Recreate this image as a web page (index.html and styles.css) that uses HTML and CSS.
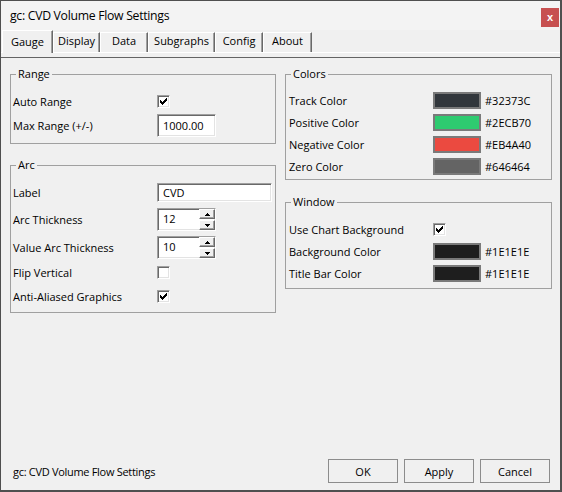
FILE: index.html
```html
<!DOCTYPE html>
<html>
<head>
<meta charset="utf-8">
<link rel="stylesheet" href="styles.css">
</head>
<body>
<div class="window">
  <div class="titlebar">
    <span class="title">gc: CVD Volume Flow Settings</span>
    <span class="close">x</span>
  </div>
  <div class="tabs">
    <div class="tab tab-gauge active">Gauge</div>
    <div class="tab tab-display">Display</div>
    <div class="tab tab-data">Data</div>
    <div class="tab tab-subgraphs">Subgraphs</div>
    <div class="tab tab-config">Config</div>
    <div class="tab tab-about">About</div>
  </div>
  <div class="tabline"></div>
  <div class="content">
    <div class="col col-left">
      <fieldset class="group group-range">
        <legend>Range</legend>
        <div class="row h24"><span>Auto Range</span><span class="check checked"><svg viewBox="0 0 13 13" width="13" height="13"><path transform="translate(3 3)" d="M0 2H1V3H2V4H3V3H4V2H5V1H6V0H7V3H6V4H5V5H4V6H3V7H2V6H1V5H0Z"/></svg></span></div>
        <div class="row h25"><span>Max Range (+/-)</span><span class="edit edit-short">1000.00</span></div>
      </fieldset>
      <fieldset class="group group-arc">
        <legend>Arc</legend>
        <div class="row h25"><span>Label</span><span class="edit edit-long">CVD</span></div>
        <div class="row h29"><span>Arc Thickness</span>
          <span class="spin"><span class="spin-val">12</span><span class="spin-btns"><span class="spin-btn"><svg viewBox="0 0 5 3" width="5" height="3"><path d="M2 0H3V1H4V2H5V3H0V2H1V1H2Z"/></svg></span><span class="spin-btn"><svg viewBox="0 0 5 3" width="5" height="3"><path d="M0 0H5V1H4V2H3V3H2V2H1V1H0Z"/></svg></span></span></span>
        </div>
        <div class="row h27"><span>Value Arc Thickness</span>
          <span class="spin"><span class="spin-val">10</span><span class="spin-btns"><span class="spin-btn"><svg viewBox="0 0 5 3" width="5" height="3"><path d="M2 0H3V1H4V2H5V3H0V2H1V1H2Z"/></svg></span><span class="spin-btn"><svg viewBox="0 0 5 3" width="5" height="3"><path d="M0 0H5V1H4V2H3V3H2V2H1V1H0Z"/></svg></span></span></span>
        </div>
        <div class="row h23"><span>Flip Vertical</span><span class="check"></span></div>
        <div class="row h25"><span>Anti-Aliased Graphics</span><span class="check checked"><svg viewBox="0 0 13 13" width="13" height="13"><path transform="translate(3 3)" d="M0 2H1V3H2V4H3V3H4V2H5V1H6V0H7V3H6V4H5V5H4V6H3V7H2V6H1V5H0Z"/></svg></span></div>
      </fieldset>
    </div>
    <div class="col col-right">
      <fieldset class="group group-colors">
        <legend>Colors</legend>
        <div class="row h22"><span>Track Color</span><span class="color"><span class="swatch sw-track"></span><span class="hex">#32373C</span></span></div>
        <div class="row h22"><span>Positive Color</span><span class="color"><span class="swatch sw-positive"></span><span class="hex">#2ECB70</span></span></div>
        <div class="row h22"><span>Negative Color</span><span class="color"><span class="swatch sw-negative"></span><span class="hex">#EB4A40</span></span></div>
        <div class="row h22"><span>Zero Color</span><span class="color"><span class="swatch sw-zero"></span><span class="hex">#646464</span></span></div>
      </fieldset>
      <fieldset class="group group-window">
        <legend>Window</legend>
        <div class="row h24"><span>Use Chart Background</span><span class="check checked"><svg viewBox="0 0 13 13" width="13" height="13"><path transform="translate(3 3)" d="M0 2H1V3H2V4H3V3H4V2H5V1H6V0H7V3H6V4H5V5H4V6H3V7H2V6H1V5H0Z"/></svg></span></div>
        <div class="row h21"><span>Background Color</span><span class="color"><span class="swatch sw-dark"></span><span class="hex">#1E1E1E</span></span></div>
        <div class="row h23"><span>Title Bar Color</span><span class="color"><span class="swatch sw-dark"></span><span class="hex">#1E1E1E</span></span></div>
      </fieldset>
    </div>
  </div>
  <div class="footer">
    <span class="status">gc: CVD Volume Flow Settings</span>
    <button class="btn">OK</button>
    <button class="btn">Apply</button>
    <button class="btn">Cancel</button>
  </div>
</div>
</body>
</html>
```

FILE: styles.css
```css
html, body {
  margin: 0;
  padding: 0;
  background: #f0f0f0;
}

body {
  font-family: "Open Sans", "Noto Sans", sans-serif;
  font-size: 11px;
  color: #000;
}

.window {
  box-sizing: border-box;
  width: 562px;
  height: 492px;
  border: 1px solid #4f4f4f;
  border-right-width: 2px;
  border-bottom-width: 2px;
  background: #f0f0f0;
  display: flex;
  flex-direction: column;
}

/* title bar */
.titlebar {
  flex: none;
  height: 29px;
  display: flex;
  justify-content: space-between;
  align-items: center;
  padding-left: 9px;
  background: #f3f3f3;
}

.title {
  font-size: 12.25px;
  letter-spacing: -0.3px;
}

.close {
  align-self: flex-start;
  margin-top: 7px;
  margin-right: 1px;
  width: 18px;
  height: 19px;
  background: #c75050;
  color: #fff;
  font: bold 11px/18px "Liberation Sans", sans-serif;
  text-align: center;
}

/* tabs */
.tabs {
  flex: none;
  box-sizing: border-box;
  height: 23px;
  display: flex;
  align-items: flex-end;
  padding-left: 1px;
  border-bottom: 1px solid #fff;
}

.tab {
  box-sizing: border-box;
  height: 20px;
  border-top: 1px solid #fff;
  border-left: 1px solid #fff;
  border-right: 1px solid #696969;
  box-shadow: inset -1px 0 0 #a0a0a0;
  text-align: center;
  line-height: 16px;
  background: #f0f0f0;
}

.tab.active {
  height: 23px;
  margin-bottom: -1px;
  padding-top: 3px;
}

.tab-gauge { width: 51px; }
.tab-display { width: 47px; }
.tab-data { width: 48px; }
.tab-subgraphs { width: 67px; }
.tab-config { width: 48px; }
.tab-about { width: 49px; }

.tabline {
  flex: none;
  height: 4px;
  border-bottom: 1px solid #646464;
}

/* content */
.content {
  flex: 1;
  display: flex;
  gap: 9px;
  padding: 8px 0 0 9px;
}

.col {
  display: flex;
  flex-direction: column;
}

.col-left { width: 266px; }
.col-right { width: 267px; }

.group {
  margin: 0;
  min-width: 0;
  padding: 7px 2px 0 2px;
  border: 1px solid #a0a0a0;
}

.group legend {
  padding: 0 2px;
  margin-left: 3px;
  line-height: 16px;
}

.group-range { padding-bottom: 5px; }
.group-arc { padding-bottom: 3px; margin-top: 13px; }
.group-colors { padding-bottom: 2px; }
.group-window { padding-bottom: 3px; margin-top: 14px; }

.group-colors .row,
.group-window .row {
  padding-left: 1px;
}

.row {
  display: grid;
  grid-template-columns: 144px auto;
  align-items: center;
  justify-items: start;
}

.h21 { height: 21px; }
.h22 { height: 22px; }
.h23 { height: 23px; }
.h24 { height: 24px; }
.h25 { height: 25px; }
.h27 { height: 27px; }
.h29 { height: 29px; }

/* sunken controls */
.check,
.edit,
.spin {
  box-sizing: border-box;
  background: #fff;
  border: 1px solid;
  border-color: #a0a0a0 #fff #fff #a0a0a0;
  box-shadow: inset 1px 1px 0 #696969, inset -1px -1px 0 #e3e3e3;
}

.check {
  position: relative;
  width: 13px;
  height: 13px;
}

.check svg {
  position: absolute;
  left: -1px;
  top: -1px;
  display: block;
  fill: #000;
  shape-rendering: crispEdges;
}

.edit {
  display: block;
  padding-left: 5px;
}

.edit-short {
  width: 59px;
  height: 23px;
  line-height: 21px;
}

.edit-long {
  width: 115px;
  height: 19px;
  line-height: 17px;
}

.spin {
  display: flex;
  width: 59px;
  height: 23px;
}

.spin-val {
  flex: 1;
  padding-left: 5px;
  line-height: 19px;
}

.spin-btns {
  width: 16px;
  display: flex;
  flex-direction: column;
  gap: 1px;
}

.spin-btn {
  flex: 1;
  box-sizing: border-box;
  display: flex;
  align-items: center;
  justify-content: center;
  background: #f0f0f0;
  border: 1px solid;
  border-color: #fff #696969 #696969 #fff;
  box-shadow: inset -1px -1px 0 #a0a0a0;
}

.spin-btn svg {
  display: block;
  fill: #000;
  shape-rendering: crispEdges;
}

/* colour swatches */
.color {
  display: flex;
  align-items: center;
}

.swatch {
  box-sizing: border-box;
  width: 48px;
  height: 17px;
  border: 2px solid #7a7a7a;
}

.sw-track { background: #32373c; }
.sw-positive { background: #2ecb70; }
.sw-negative { background: #eb4a40; }
.sw-zero { background: #646464; }
.sw-dark { background: #1e1e1e; }

.hex {
  margin-left: 4px;
}

/* footer */
.footer {
  flex: none;
  box-sizing: border-box;
  height: 44px;
  display: flex;
  align-items: center;
  padding: 6px 10px 0 12px;
}

.status {
  flex: 1;
  letter-spacing: -0.3px;
}

.btn {
  box-sizing: border-box;
  width: 70px;
  height: 24px;
  margin: 0 0 0 6px;
  padding: 0;
  border: 1px solid #8c8c8c;
  border-radius: 0;
  background: #f0f0f0;
  font: inherit;
  color: #000;
}
```
